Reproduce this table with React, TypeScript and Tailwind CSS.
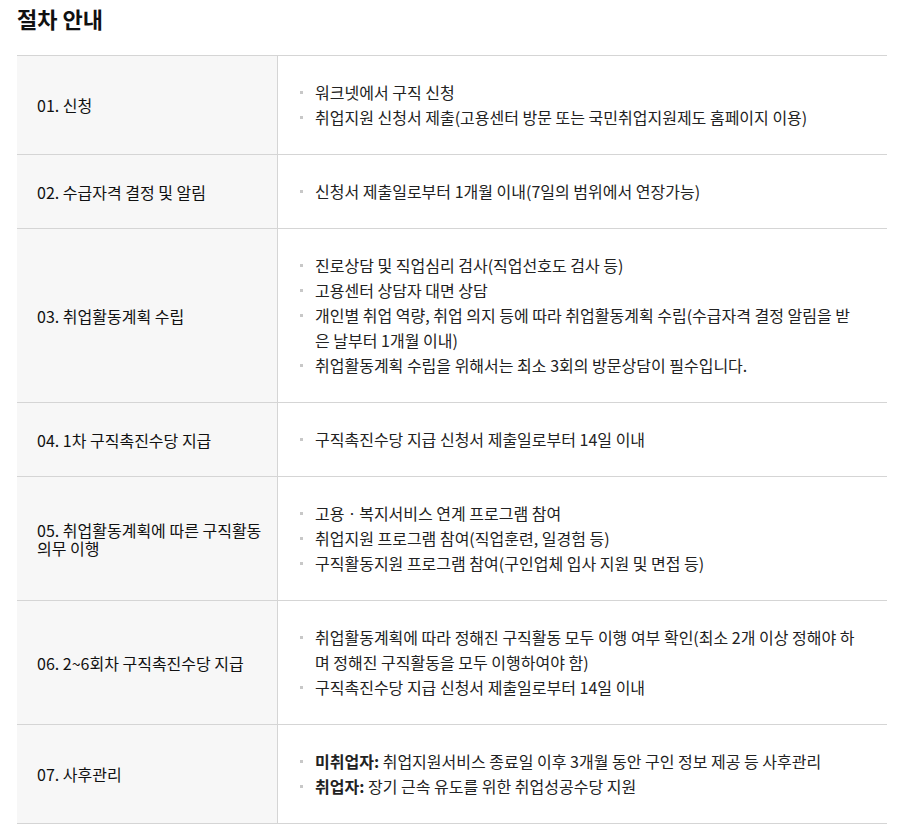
import React from 'react';

type Item = { bold?: string; text: string };
type Step = { title: string; items: Item[] };

const steps: Step[] = [
  {
    title: '01. 신청',
    items: [{ text: '워크넷에서 구직 신청' }, { text: '취업지원 신청서 제출(고용센터 방문 또는 국민취업지원제도 홈페이지 이용)' }],
  },
  { title: '02. 수급자격 결정 및 알림', items: [{ text: '신청서 제출일로부터 1개월 이내(7일의 범위에서 연장가능)' }] },
  {
    title: '03. 취업활동계획 수립',
    items: [
      { text: '진로상담 및 직업심리 검사(직업선호도 검사 등)' },
      { text: '고용센터 상담자 대면 상담' },
      { text: '개인별 취업 역량, 취업 의지 등에 따라 취업활동계획 수립(수급자격 결정 알림을 받은 날부터 1개월 이내)' },
      { text: '취업활동계획 수립을 위해서는 최소 3회의 방문상담이 필수입니다.' },
    ],
  },
  { title: '04. 1차 구직촉진수당 지급', items: [{ text: '구직촉진수당 지급 신청서 제출일로부터 14일 이내' }] },
  {
    title: '05. 취업활동계획에 따른 구직활동 의무 이행',
    items: [
      { text: '고용ㆍ복지서비스 연계 프로그램 참여' },
      { text: '취업지원 프로그램 참여(직업훈련, 일경험 등)' },
      { text: '구직활동지원 프로그램 참여(구인업체 입사 지원 및 면접 등)' },
    ],
  },
  {
    title: '06. 2~6회차 구직촉진수당 지급',
    items: [
      { text: '취업활동계획에 따라 정해진 구직활동 모두 이행 여부 확인(최소 2개 이상 정해야 하며 정해진 구직활동을 모두 이행하여야 함)' },
      { text: '구직촉진수당 지급 신청서 제출일로부터 14일 이내' },
    ],
  },
  {
    title: '07. 사후관리',
    items: [
      { bold: '미취업자:', text: ' 취업지원서비스 종료일 이후 3개월 동안 구인 정보 제공 등 사후관리' },
      { bold: '취업자:', text: ' 장기 근속 유도를 위한 취업성공수당 지원' },
    ],
  },
];

export default function App() {
  return (
    <div className="bg-white px-[17px] pt-[3px] pb-4 text-[#222] [font-family:'Noto_Sans_CJK_KR','Noto_Sans',sans-serif]">
      <h2 className="text-[22px] font-bold leading-[31px] text-[#111]">절차 안내</h2>
      <div className="mt-[21px] w-[870px] border-t border-[#d5d5d5]">
        {steps.map((s) => (
          <div key={s.title} className="flex border-b border-[#d5d5d5]">
            <div className="flex w-[261px] shrink-0 items-center border-r border-[#d5d5d5] bg-[#f7f7f7] pl-5 pr-2 text-[16px] leading-[18px] text-[#111]">
              {s.title}
            </div>
            <ul className="flex-1 overflow-hidden py-6 pl-[22px] pr-[26px] text-[16px] leading-[25px]">
              {s.items.map((it, i) => (
                <li key={i} className="relative pl-[15px]">
                  <span className="absolute left-0 top-[11px] h-[3px] w-[3px] bg-[#c8c8c8]" />
                  {it.bold && <b className="font-bold">{it.bold}</b>}
                  {it.text}
                </li>
              ))}
            </ul>
          </div>
        ))}
      </div>
    </div>
  );
}
